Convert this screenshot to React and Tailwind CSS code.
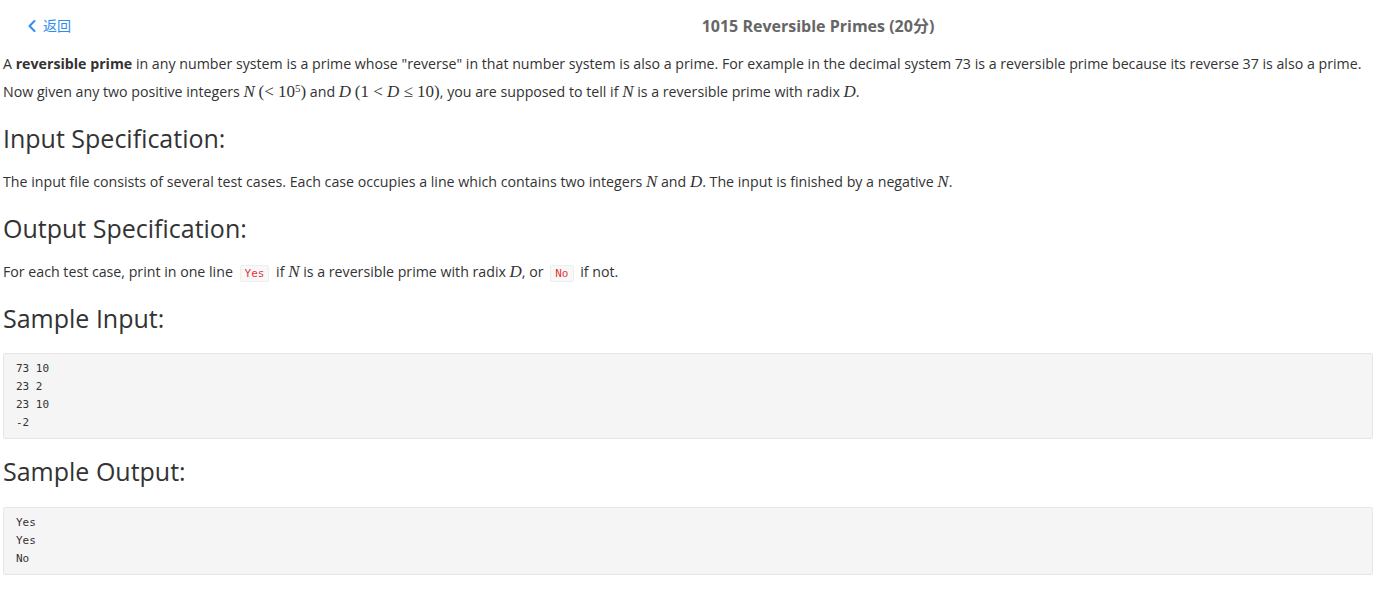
import { ChevronLeft } from 'lucide-react'

const SANS = { fontFamily: '"Open Sans", "Noto Sans CJK SC", sans-serif' }

function M({ children }) {
  return (
    <span className="italic text-[17px]" style={{ fontFamily: '"Liberation Serif", serif' }}>
      {children}
    </span>
  )
}

function R({ children }) {
  return (
    <span className="text-[17px]" style={{ fontFamily: '"Liberation Serif", serif' }}>
      {children}
    </span>
  )
}

function Code({ children }) {
  return (
    <code
      className="mx-[3px] px-[4px] py-[1px] rounded-[2px] border border-[#eeeeee] bg-[#f8f8f8] text-[11px] text-[#e0383a]"
      style={{ fontFamily: '"DejaVu Sans Mono", monospace' }}
    >
      {children}
    </code>
  )
}

function H({ children, className = '' }) {
  return <h2 className={`text-[25px] leading-[34px] text-[#333] ${className}`}>{children}</h2>
}

function Pre({ lines, className = '' }) {
  return (
    <pre
      className={`border border-[#e6e6e6] bg-[#f5f5f5] rounded-[2px] pl-[12px] pt-[6px] pb-[6px] text-[11px] leading-[18px] text-[#333] ${className}`}
      style={{ fontFamily: '"DejaVu Sans Mono", monospace' }}
    >
      {lines.join('\n')}
    </pre>
  )
}

export default function App() {
  return (
    <div className="min-h-screen bg-white pl-[3px] pr-[20px] text-[#333]" style={SANS}>
      <header className="flex items-center h-[52px]">
        <div className="w-[260px]">
          <a className="inline-flex items-center text-[14px] text-[#2d8cf0] ml-[19px] mt-[5px] cursor-pointer">
            <ChevronLeft size={20} strokeWidth={2.4} className="mr-[1px]" />
            返回
          </a>
        </div>
        <h1 className="flex-1 text-center text-[16px] font-bold text-[#666]">
          1015 Reversible Primes (20分)
        </h1>
      </header>

      <p className="text-[14.2px] leading-[28px] -mt-[2px]">
        <span className="whitespace-nowrap">
          A <b>reversible prime</b> in any number system is a prime whose "reverse" in that number system is also a prime. For example in the decimal system 73 is a reversible prime because its reverse 37 is also a prime.
        </span>
        <br />
        Now given any two positive integers <M>N</M> <R>(&lt; 10<sup className="text-[11px]">5</sup>)</R> and <M>D</M> <R>(1 &lt; <i>D</i> ≤ 10)</R>, you are supposed to tell if <M>N</M> is a reversible prime with radix <M>D</M>.
      </p>

      <H className="mt-[15px]">Input Specification:</H>
      <p className="text-[14.2px] leading-[28px] mt-[13px]">
        The input file consists of several test cases. Each case occupies a line which contains two integers <M>N</M> and <M>D</M>. The input is finished by a negative <M>N</M>.
      </p>

      <H className="mt-[15px]">Output Specification:</H>
      <p className="text-[14.2px] leading-[28px] mt-[13px]">
        For each test case, print in one line <Code>Yes</Code> if <M>N</M> is a reversible prime with radix <M>D</M>, or <Code>No</Code> if not.
      </p>

      <H className="mt-[13px]">Sample Input:</H>
      <Pre className="mt-[18px]" lines={['73 10', '23 2', '23 10', '-2']} />

      <H className="mt-[15px]">Sample Output:</H>
      <Pre className="mt-[19px]" lines={['Yes', 'Yes', 'No']} />
    </div>
  )
}
